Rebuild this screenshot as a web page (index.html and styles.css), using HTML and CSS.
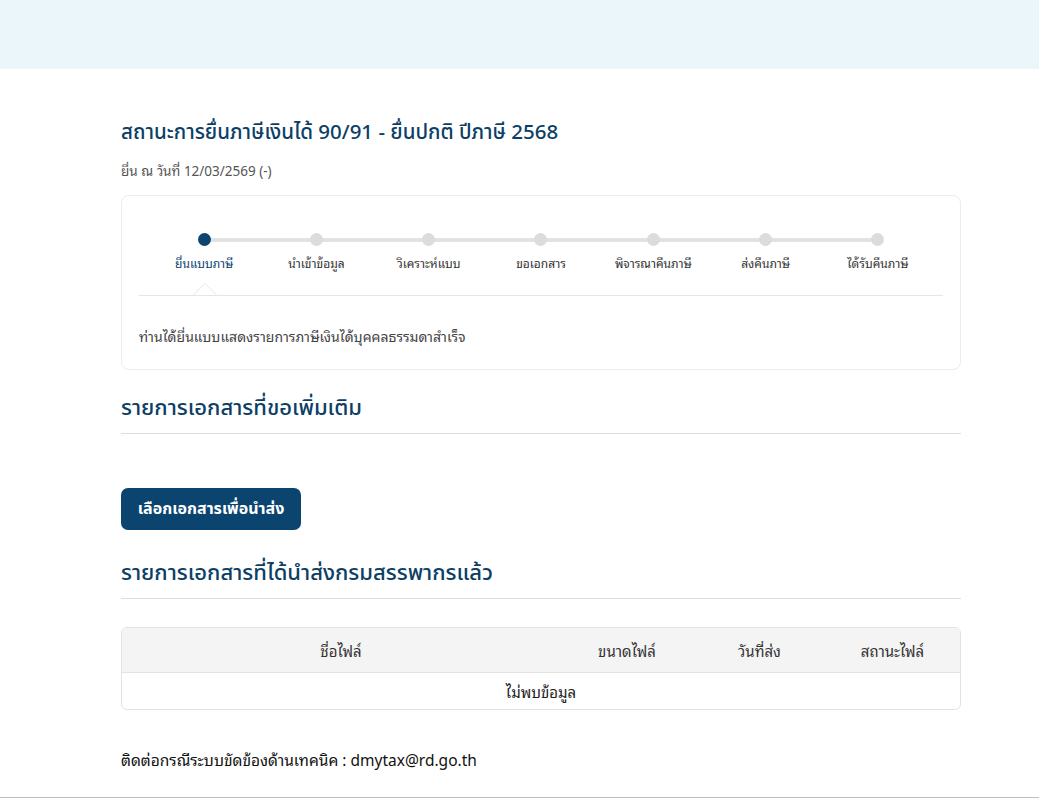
FILE: index.html
```html
<!DOCTYPE html>
<html lang="th">
<head>
<meta charset="utf-8">
<title>สถานะการยื่นภาษี</title>
<link rel="stylesheet" href="styles.css">
</head>
<body>
<header class="topband"></header>
<main class="container">
  <h1 class="page-title">สถานะการยื่นภาษีเงินได้ 90/91 - ยื่นปกติ ปีภาษี 2568</h1>
  <p class="submit-date">ยื่น ณ วันที่ 12/03/2569 (-)</p>

  <section class="status-card">
    <ol class="steps">
      <li class="step active"><span class="dot"></span><span class="label">ยื่นแบบภาษี</span></li>
      <li class="step"><span class="dot"></span><span class="label">นำเข้าข้อมูล</span></li>
      <li class="step"><span class="dot"></span><span class="label">วิเคราะห์แบบ</span></li>
      <li class="step"><span class="dot"></span><span class="label">ขอเอกสาร</span></li>
      <li class="step"><span class="dot"></span><span class="label">พิจารณาคืนภาษี</span></li>
      <li class="step"><span class="dot"></span><span class="label">ส่งคืนภาษี</span></li>
      <li class="step last"><span class="dot"></span><span class="label">ได้รับคืนภาษี</span></li>
    </ol>
    <div class="divider"><span class="caret"></span></div>
    <p class="status-msg">ท่านได้ยื่นแบบแสดงรายการภาษีเงินได้บุคคลธรรมดาสำเร็จ</p>
  </section>

  <h2 class="section-title">รายการเอกสารที่ขอเพิ่มเติม</h2>
  <div class="actions">
    <button class="btn-primary" type="button">เลือกเอกสารเพื่อนำส่ง</button>
  </div>

  <h2 class="section-title second">รายการเอกสารที่ได้นำส่งกรมสรรพากรแล้ว</h2>
  <div class="table-wrap">
    <table class="doc-table">
      <colgroup>
        <col class="c-name">
        <col class="c-size">
        <col class="c-date">
        <col class="c-status">
      </colgroup>
      <thead>
        <tr><th>ชื่อไฟล์</th><th>ขนาดไฟล์</th><th>วันที่ส่ง</th><th>สถานะไฟล์</th></tr>
      </thead>
      <tbody>
        <tr><td colspan="4">ไม่พบข้อมูล</td></tr>
      </tbody>
    </table>
  </div>

  <p class="contact">ติดต่อกรณีระบบขัดข้องด้านเทคนิค : dmytax@rd.go.th</p>
</main>
<footer class="bottom-line"></footer>
</body>
</html>
```

FILE: styles.css
```css
* { box-sizing: border-box; }
html, body { margin: 0; padding: 0; background: #fff; }
body {
  font-family: "Noto Sans Thai Looped", "Loma", "Garuda", "Tahoma", "DejaVu Sans", "Noto Sans", sans-serif;
  color: #333;
  font-size: 13px;
}
.topband { height: 69px; background: #eaf6fa; }

.container {
  width: 840px;
  margin-left: 121px;
  padding-top: 48px;
}
.page-title,
.section-title,
.btn-primary {
  font-family: "Noto Sans", "Noto Sans Thai", "Open Sans", sans-serif;
}
.page-title {
  margin: 0;
  font-size: 20.5px;
  line-height: 28px;
  font-weight: 500;
  color: #0d3f66;
}
.submit-date {
  margin: 15px 0 0;
  font-size: 13.5px;
  line-height: 20px;
  color: #555;
}

.status-card {
  margin-top: 15px;
  border: 1px solid #ececec;
  border-radius: 8px;
  padding: 37px 17px 23px;
}
.steps {
  list-style: none;
  margin: 0 9px;
  padding: 0;
  display: grid;
  grid-template-columns: repeat(7, 1fr);
}
.step {
  position: relative;
  display: flex;
  flex-direction: column;
  align-items: center;
}
.step::after {
  content: "";
  position: absolute;
  top: 5px;
  left: 50%;
  width: 100%;
  height: 4px;
  background: #e2e2e2;
  z-index: 0;
}
.step.last::after { display: none; }
.dot {
  position: relative;
  z-index: 1;
  width: 13px;
  height: 13px;
  border-radius: 50%;
  background: #dcdcdc;
}
.step.active .dot { background: #0c4470; }
.label {
  margin-top: 8px;
  font-size: 12px;
  line-height: 18px;
  color: #333;
  white-space: nowrap;
}
.step.active .label { color: #0c4470; }

.divider {
  position: relative;
  margin-top: 23px;
  height: 1px;
  background: #e6e6e6;
}
.caret {
  position: absolute;
  left: 54px;
  top: -12px;
  width: 0;
  height: 0;
  border-left: 12px solid transparent;
  border-right: 12px solid transparent;
  border-bottom: 12px solid #e6e6e6;
}
.caret::after {
  content: "";
  position: absolute;
  left: -11px;
  top: 1px;
  border-left: 11px solid transparent;
  border-right: 11px solid transparent;
  border-bottom: 11px solid #fff;
}
.status-msg {
  margin: 30px 0 0;
  font-size: 14px;
  line-height: 20px;
  color: #444;
}

.section-title {
  margin: 22px 0 0;
  padding-bottom: 13px;
  border-bottom: 1px solid #dedede;
  font-size: 22px;
  line-height: 28px;
  font-weight: 500;
  color: #0d3f66;
}
.section-title.second { margin-top: 27px; }

.actions { margin-top: 54px; }
.btn-primary {
  width: 180px;
  height: 42px;
  border: 0;
  border-radius: 7px;
  background: #0c4470;
  color: #fff;
  font-size: 16px;
  font-weight: 700;
  cursor: pointer;
}

.table-wrap {
  margin-top: 28px;
  border: 1px solid #e2e2e2;
  border-radius: 6px;
  overflow: hidden;
}
.doc-table {
  width: 100%;
  border-collapse: collapse;
  table-layout: fixed;
}
.c-name { width: 438px; }
.c-size { width: 134px; }
.c-date { width: 131px; }
.c-status { width: auto; }
.doc-table th {
  height: 44px;
  background: #f4f4f4;
  border-bottom: 1px solid #e2e2e2;
  font-weight: 400;
  font-size: 15px;
  color: #333;
  text-align: center;
}
.doc-table td {
  height: 37px;
  text-align: center;
  font-size: 15px;
  color: #222;
}

.contact {
  margin: 39px 0 0;
  padding-bottom: 28px;
  font-size: 15.5px;
  line-height: 20px;
  color: #111;
}
.bottom-line { border-top: 1px solid #bdbdbd; height: 2px; }
```
